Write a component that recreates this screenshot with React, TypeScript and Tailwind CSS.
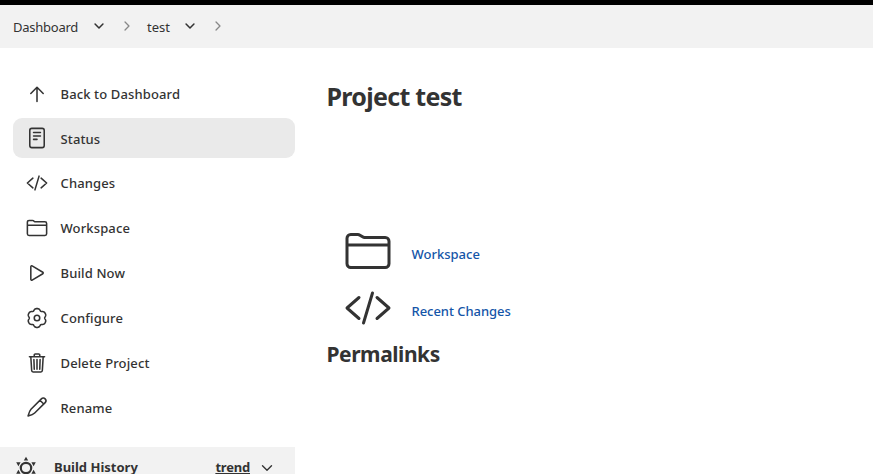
import type { ReactNode } from "react";

const gearOutline =
  Array.from({ length: 96 }, (_, i) => {
    const angle = (i / 96) * Math.PI * 2;
    const radius = 204 + 20 * Math.cos(6 * angle) - 5 * Math.cos(12 * angle);
    const x = 256 + radius * Math.sin(angle);
    const y = 256 - radius * Math.cos(angle);
    return `${i === 0 ? "M" : "L"}${x.toFixed(1)} ${y.toFixed(1)}`;
  }).join("") + "z";

const paths: Record<string, ReactNode> = {
  up: <path d="M112 244 256 100l144 144M256 120v310" />,
  status: (
    <>
      <rect x="88" y="32" width="336" height="448" rx="48" />
      <path d="M176 128h160M176 208h160M176 288h80" />
    </>
  ),
  code: <path d="M160 368 32 256l128-112M352 368l128-112-128-112M304 96l-96 320" />,
  folder: (
    <path d="M440 432H72a40 40 0 0 1-40-40V120a40 40 0 0 1 40-40h75.89a40 40 0 0 1 22.19 6.72l27.84 18.56a40 40 0 0 0 22.19 6.72H440a40 40 0 0 1 40 40v240a40 40 0 0 1-40 40zM32 192h448" />
  ),
  play: <path d="M112 111v290c0 17.44 17 28.52 31 20.16l247.9-148.37c12.12-7.25 12.12-26.33 0-33.58L143 90.84c-14-8.36-31 2.72-31 20.16z" />,
  gear: (
    <>
      <path d={gearOutline} />
      <circle cx="256" cy="256" r="64" />
    </>
  ),
  trash: (
    <path d="m112 112 20 320c.95 18.49 14.4 32 32 32h184c17.67 0 30.87-13.51 32-32l20-320M80 112h352M192 112V72a23.93 23.93 0 0 1 24-24h80a23.93 23.93 0 0 1 24 24v40M256 176v224M184 176l8 224M328 176l-8 224" />
  ),
  pencil: (
    <path d="M358 66 116 310Q78 350 48 464q114-30 154-68L446 154c56-58-30-146-88-88zM326 100l86 86" />
  ),
  down: <path d="m112 184 144 144 144-144" />,
  right: <path d="m184 112 144 144-144 144" />,
};

function Icon({ name, className, weight = 32 }: { name: string; className: string; weight?: number }) {
  return (
    <svg viewBox="0 0 512 512" className={`shrink-0 overflow-visible ${className}`} fill="none" stroke="currentColor" strokeWidth={weight} strokeLinecap="round" strokeLinejoin="round">
      {paths[name]}
    </svg>
  );
}

const tasks = [
  ["up", "Back to Dashboard"],
  ["status", "Status"],
  ["code", "Changes"],
  ["folder", "Workspace"],
  ["play", "Build Now"],
  ["gear", "Configure"],
  ["trash", "Delete Project"],
  ["pencil", "Rename"],
];

export default function App() {
  return (
    <div className="h-[474px] w-[873px] overflow-hidden bg-white font-['Noto_Sans',sans-serif] text-[13px] text-[#333]">
      <header className="flex h-12 items-center border-t-5 border-black bg-[#f2f2f2] pl-[13px]">
        <span className="w-[65px] pt-[2px] tracking-[-0.25px] whitespace-nowrap">Dashboard</span>
        <Icon name="down" className="mb-px ml-[14px] size-[14px]" weight={56} />
        <Icon name="right" className="mb-px ml-[14px] size-[14px] text-[#888]" weight={48} />
        <span className="ml-[13px] w-[22px] pt-[2px]">test</span>
        <Icon name="down" className="mb-px ml-[14px] size-[14px]" weight={56} />
        <Icon name="right" className="mb-px ml-[14px] size-[14px] text-[#888]" weight={48} />
      </header>
      <div className="flex">
        <aside className="w-[295px] shrink-0 pt-[25px]">
          <nav className="flex flex-col gap-[4.85px] pl-[13px]">
            {tasks.map(([icon, label]) => (
              <a key={label} className={`flex h-10 items-center rounded-[9px] pt-px pl-[13px] font-medium ${icon === "status" ? "bg-[#eaeaea]" : ""}`}>
                <Icon name={icon} className="size-[22px]" weight={36} />
                <span className="ml-[12.5px] pt-[2px] tracking-[0.13px]">{label}</span>
              </a>
            ))}
          </nav>
          <section className="mt-5 flex h-10 items-center bg-[#f2f2f2] pl-[14px] font-bold">
            <svg viewBox="0 0 24 24" className="mt-[2px] size-6" fill="currentColor">
              <circle cx="12" cy="12" r="5.2" fill="none" stroke="currentColor" strokeWidth="2.2" />
              <path d="m12 .8 2.2 3.8H9.8zM12 23.2l2.2-3.8H9.8zM2.2 6.2l4.4.1-2.2 3.9zM21.8 6.2l-4.4.1 2.2 3.9zM2.2 17.8l4.4-.1-2.2-3.9zM21.8 17.8l-4.4-.1 2.2-3.9z" />
            </svg>
            <span className="ml-4 pt-[2px]">Build History</span>
            <a className="ml-auto pt-[2px] tracking-[-0.2px] underline">trend</a>
            <Icon name="down" className="mt-[2px] mr-5 ml-[9px] size-4" weight={44} />
          </section>
        </aside>
        <main className="pt-[30px] pl-[31.5px]">
          <h1 className="text-[25px] leading-[36px] font-bold tracking-[-0.7px]">Project test</h1>
          <div className="mt-[113px] flex flex-col gap-[9px] pl-[17.5px] font-medium text-[#1455a8]">
            <a className="flex h-12 items-center">
              <Icon name="folder" className="size-12 text-[#333]" />
              <span className="mt-[8px] ml-[19.5px]">Workspace</span>
            </a>
            <a className="flex h-12 items-center">
              <Icon name="code" className="size-12 text-[#333]" />
              <span className="mt-[8px] ml-[19.5px] tracking-[-0.05px]">Recent Changes</span>
            </a>
          </div>
          <h2 className="mt-[7px] text-[21px] leading-[30px] font-bold tracking-[-0.45px]">Permalinks</h2>
        </main>
      </div>
    </div>
  );
}
